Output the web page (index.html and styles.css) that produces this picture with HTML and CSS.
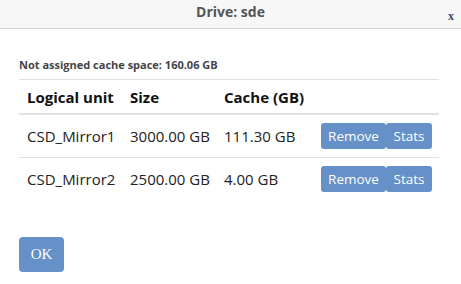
FILE: index.html
```html
<!DOCTYPE html>
<html lang="en">
<head>
  <meta charset="UTF-8">
  <link rel="stylesheet" href="styles.css">
  <title>Drive: sde</title>
</head>
<body>
  <div class="dialog">
    <header class="titlebar">
      <span></span>
      <span class="title">Drive: sde</span>
      <span class="close">x</span>
    </header>
    <div class="content">
      <p class="free-space">Not assigned cache space: 160.06 GB</p>
      <table class="units">
        <colgroup>
          <col class="col-name">
          <col class="col-size">
          <col class="col-cache">
          <col>
        </colgroup>
        <thead>
          <tr>
            <th>Logical unit</th>
            <th>Size</th>
            <th>Cache (GB)</th>
            <th></th>
          </tr>
        </thead>
        <tbody>
          <tr>
            <td>CSD_Mirror1</td>
            <td>3000.00 GB</td>
            <td>111.30 GB</td>
            <td class="actions"><button class="btn">Remove</button><button class="btn">Stats</button></td>
          </tr>
          <tr>
            <td>CSD_Mirror2</td>
            <td>2500.00 GB</td>
            <td>4.00 GB</td>
            <td class="actions"><button class="btn">Remove</button><button class="btn">Stats</button></td>
          </tr>
        </tbody>
      </table>
      <button class="ok">OK</button>
    </div>
  </div>
</body>
</html>
```

FILE: styles.css
```css
html, body {
  margin: 0;
  padding: 0;
  background: #fff;
}

body {
  font-family: "Open Sans", "Noto Sans", sans-serif;
  width: 461px;
  height: 284px;
  overflow: hidden;
}

.titlebar {
  display: grid;
  grid-template-columns: 1fr auto 1fr;
  height: 28px;
  background: #f7f7f7;
  border-bottom: 1px solid #d6d6d6;
}

.title {
  font-size: 14px;
  font-weight: bold;
  color: #555;
  line-height: 24px;
}

.close {
  justify-self: end;
  align-self: end;
  margin: 0 7px 6px 0;
  font-family: "Liberation Serif", serif;
  font-weight: bold;
  font-size: 12px;
  line-height: 12px;
  color: #3a4a66;
}

.content {
  padding: 28px 22px 0 19px;
}

.free-space {
  margin: 0;
  padding-bottom: 7px;
  font-size: 11px;
  font-weight: bold;
  color: #444;
  border-bottom: 1px solid #e0e0e0;
}

.units {
  width: 420px;
  table-layout: fixed;
  border-collapse: collapse;
  font-size: 15px;
  color: #222;
}

.col-name { width: 103px; }
.col-size { width: 94px; }
.col-cache { width: 97px; }

.units th {
  text-align: left;
  font-weight: bold;
  color: #111;
  padding: 7px 8px 6px;
  border-bottom: 2px solid #dee2e6;
  white-space: nowrap;
}

.units td {
  padding: 8px;
  border-top: 1px solid #e2e2e2;
  vertical-align: middle;
  white-space: nowrap;
}

.units tbody tr:first-child td {
  border-top: none;
}

.btn {
  font-family: inherit;
  font-size: 13.5px;
  color: #fff;
  background: #6590c8;
  border: none;
  border-radius: 3px;
  height: 26px;
  width: 65px;
  padding: 0;
  margin: 0;
}

.btn + .btn {
  width: 46px;
}

.ok {
  margin-top: 37px;
  font-family: "Liberation Serif", serif;
  font-size: 15px;
  color: #fff;
  background: #6590c8;
  border: none;
  border-radius: 4px;
  width: 45px;
  height: 35px;
}
```
